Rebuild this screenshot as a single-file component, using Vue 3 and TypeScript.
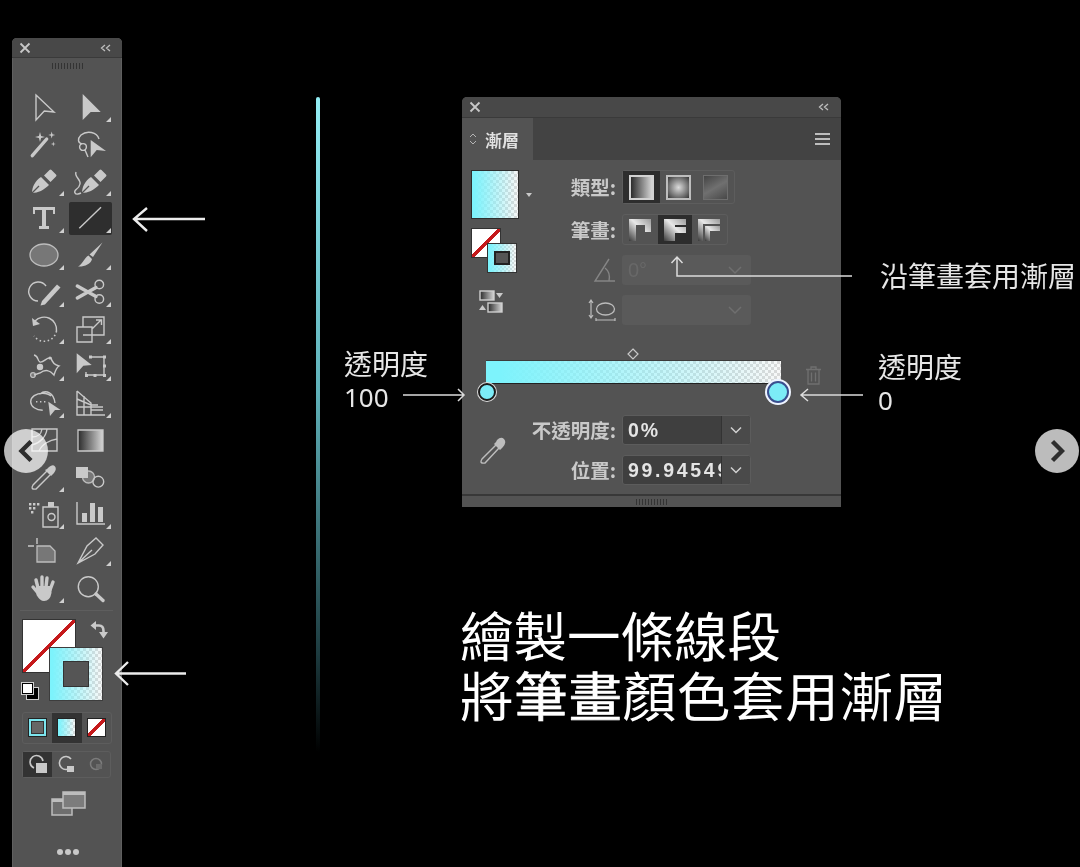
<script setup lang="ts">
interface Tool {
  s?: string // thin outline
  t?: string // heavy stroke
  f?: string // solid fill
  m?: string // mid grey fill with outline
  k?: string // dark cut over a fill
  dash?: string
  grad?: string
  corner?: boolean
  active?: boolean
}

const circle = (cx: number, cy: number, r: number) =>
  `M${cx - r} ${cy}a${r} ${r} 0 1 0 ${r * 2} 0a${r} ${r} 0 1 0 ${-r * 2} 0Z`

const star = (x: number, y: number, r: number) => {
  const k = r * 0.22
  return `M${x} ${y - r}L${x + k} ${y - k}L${x + r} ${y}L${x + k} ${y + k}L${x} ${y + r}L${x - k} ${y + k}L${x - r} ${y}L${x - k} ${y - k}Z`
}

const nib = (o: number) =>
  `M${6 + o} 30C${6 + o} 24 ${9 + o} 18 ${15 + o} 14L${23 + o} 22C${18 + o} 27 ${12 + o} 30 ${6 + o} 30Z` +
  `M${18 + o} 12.5L${23.5 + o} 7Q${24.5 + o} 6 ${25.5 + o} 7L${30 + o} 11.5Q${31 + o} 12.5 ${30 + o} 13.5L${24.5 + o} 19Z`

const tools: Tool[] = [
  { s: 'M10 6L28 23L18.3 22L10 31Z' },
  { f: 'M9.7 5L27.7 23L17.7 23L9.7 31Z', corner: true },

  { t: 'M6.3 29.7L20.7 13', f: star(14, 11, 5) + star(25.7, 9, 3.5) + star(27.3, 18, 2.5) },
  {
    s: 'M26 13C24 6 14 4 8 9C4 13 5 17 9 18' + circle(10, 21, 3.4) + 'M12 24L15 31',
    f: 'M17.7 14L33 25L23.7 24L17.7 31.3Z'
  },

  { f: nib(0), k: 'M6 30L13 23', corner: true },
  { f: nib(3), k: 'M9 30L16 23', s: 'M3 9C1 14 8 16 7 21C6 27 0 26 2 30C3 32 6 31 8 30', corner: true },

  { f: 'M7 7H29V14H27V10H20V26H23V29H13V26H16V10H9V14H7Z', corner: true },
  { s: 'M6.3 28.3L28 7.3', corner: true, active: true },

  { m: 'M4 18a14 11 0 1 0 28 0a14 11 0 1 0 -28 0Z', corner: true },
  {
    f: 'M29.5 5.5L20 20L16.5 17.5ZM15.5 18.5L19 22C18 27 11 30 5 29.5C10 27 11 21 15.5 18.5Z',
    corner: true
  },

  { s: 'M20 12A9.5 9.5 0 1 0 12 27', f: 'M16 27L31 10.5L34.5 13.5L19 30.5L14.5 31.5Z', corner: true },
  { s: circle(26.3, 10.5, 4.3) + circle(26.3, 25, 4.3), t: 'M4.3 12L23 22.5M4.3 24L23 13.5', corner: true },

  {
    s: 'M9 10A12.5 12.5 0 0 1 30.5 20',
    dash: 'M30.5 20A12.5 12.5 0 0 1 8 25',
    f: 'M6 7L7 15L14 13Z',
    corner: true
  },
  { s: 'M10 16V6H31V24H19M4 16H19V31H4ZM10 24H19M19 18L28 9M23 9H28.5V14', corner: true },

  {
    s: 'M8 7C13 8 11 13 14 14C18 15 20 9 25 10C26 14 29 17 33 18C30 20 29 24 28 27C24 22 19 21 14 25L8 27',
    f: circle(14, 19, 3.2) + circle(24, 10, 1.6),
    m: circle(7, 27, 2.4),
    corner: true
  },
  {
    s: 'M18 9H31V27H13V24',
    f: 'M3.7 5.3L18.7 17L10.3 17.7L3.7 25.3ZM16 7.5h3v3h-3ZM30 7.5h3v3h-3ZM30 16.5h3v3h-3ZM30 26h3v3h-3ZM20.5 26h3v3h-3ZM12 26h3v3h-3Z',
    corner: true
  },

  {
    s: 'M16.7 25.2C10 25.2 4.7 21.4 4.7 16.7C4.7 12 10 8.2 16.7 8.2C20 8.2 23 9 25 11M14 9C20 4 28 8 29 18M10 16.7h1.4M14 16.7h1.4M18 16.7h1.4',
    f: 'M22.3 16.7L34.7 25L29 25L24 31Z',
    corner: true
  },
  {
    s: 'M4 6V30H32M4 6L18 18V30M4 14L18 20M4 22H30M11 11V30M18 20H25M18 25H30',
    corner: true
  },

  { s: 'M6 7H31V29H6ZM6 23C14 21 20 15 21 7M13 29C16 22 24 18 31 17M6 15C12 15 15 13 16 7' },
  { grad: 'M5 8H30V29H5Z' },

  {
    s: 'M21 12L7 26Q4 31 10 30L24 16',
    f: 'M19 11L25 17L28 14Q31 10 29 7.5Q27 5 23 8L21 10Z',
    corner: true
  },
  { f: 'M3 8H15V19H3Z', m: circle(15.5, 18, 6), s: circle(25.3, 22.7, 5.4) },

  {
    s: 'M17 11H32V31H17ZM29 21a3.5 3.5 0 1 0 -7 0a3.5 3.5 0 1 0 7 0Z',
    f: 'M22 6H28V11H22ZM3 7h2.4v2.4H3ZM7 7h2.4v2.4H7ZM11 7h2.4v2.4H11ZM3 11h2.4v2.4H3ZM7 11h2.4v2.4H7ZM5 15h2.4v2.4H5Z',
    corner: true
  },
  {
    s: 'M4 6V28H32',
    f: 'M9 17H14V26H9ZM17 7H22V26H17ZM25 11H30V26H25Z',
    corner: true
  },

  { m: 'M11 13H24L29 18V29H11Z', s: 'M2 13H8M11 5V11' },
  { s: 'M5 30L14 13L23 5L30 12L22 21ZM5 30L19 17', corner: true },

  {
    t: 'M12 18L10 10M16 17V7M20 17L21 8M24 20L27 12M12 23L7 17',
    f: 'M10 16H25.5V23Q24 31 18 31Q14 31 10.5 25Z',
    corner: true
  },
  { s: circle(15.3, 16.7, 10), t: 'M23 24L30 30.5' }
]
</script>

<template>
  <div class="stage">
    <svg class="defs" width="0" height="0">
      <defs>
        <linearGradient id="tool-grad">
          <stop offset="0" stop-color="#2b2b2b" />
          <stop offset="1" stop-color="#d6d6d6" />
        </linearGradient>
        <linearGradient id="stroke-grad" x1="0" y1="1" x2="1" y2="0">
          <stop offset="0" stop-color="#3a3a3a" />
          <stop offset="0.55" stop-color="#e8e8e8" />
          <stop offset="1" stop-color="#9a9a9a" />
        </linearGradient>
      </defs>
    </svg>

    <!-- tools panel -->
    <aside class="toolbar">
      <div class="title-bar">
        <svg width="12" height="12" viewBox="0 0 12 12"><path class="x" d="M1.5 1.5L10.5 10.5M10.5 1.5L1.5 10.5" /></svg>
        <svg class="collapse" width="11" height="8" viewBox="0 0 11 8"><path d="M5 1L1.5 4L5 7M10 1L6.5 4L10 7" /></svg>
      </div>
      <div class="grip-row"><i class="grip"></i></div>
      <div class="tools">
        <div v-for="(tool, i) in tools" :key="i" class="tool" :class="{ active: tool.active, corner: tool.corner }">
          <svg width="36" height="36" viewBox="0 0 36 36">
            <path v-if="tool.grad" :d="tool.grad" fill="url(#tool-grad)" stroke="#c9c9c9" stroke-width="1.3" />
            <path v-if="tool.m" class="mid" :d="tool.m" />
            <path v-if="tool.f" class="solid" :d="tool.f" />
            <path v-if="tool.k" class="cut" :d="tool.k" />
            <path v-if="tool.t" class="heavy" :d="tool.t" />
            <path v-if="tool.s" class="thin" :d="tool.s" />
            <path v-if="tool.dash" class="dots" :d="tool.dash" />
          </svg>
        </div>
      </div>
      <div class="divider"></div>
      <div class="colors">
        <div class="big-fill none"></div>
        <div class="big-stroke grad"><i></i></div>
        <svg class="swap" width="18" height="18" viewBox="0 0 18 18">
          <path d="M5 4.5H9Q13.5 4.5 13.5 10V12" fill="none" stroke="#c9c9c9" stroke-width="2.6" />
          <path d="M0.5 4.5L6 0V9ZM9 11H18L13.5 17.5Z" fill="#c9c9c9" />
        </svg>
        <div class="default-colors"><b></b><i></i></div>
      </div>
      <div class="seg modes">
        <div class="mode"><span class="mini ring"><i></i></span></div>
        <div class="mode on"><span class="mini grad"></span></div>
        <div class="mode"><span class="mini none"></span></div>
      </div>
      <div class="seg draws">
        <div class="draw on"><svg width="22" height="22" viewBox="0 0 22 22"><path d="M16 8A6.5 6.5 0 1 0 7 15" fill="none" stroke="#c9c9c9" stroke-width="1.6" /><path d="M9 10H20V20H9Z" fill="#c9c9c9" /></svg></div>
        <div class="draw"><svg width="22" height="22" viewBox="0 0 22 22"><path d="M15 14A6.5 6.5 0 1 1 15 6" fill="none" stroke="#c9c9c9" stroke-width="1.6" /><path d="M11 13H18V19H11Z" fill="#c9c9c9" /></svg></div>
        <div class="draw"><svg width="22" height="22" viewBox="0 0 22 22"><circle cx="11" cy="11" r="5.5" fill="none" stroke="#7c7c7c" stroke-width="1.5" /><path d="M11 11H17V16H11Z" fill="#6b6b6b" /></svg></div>
      </div>
      <svg class="screen" width="36" height="26" viewBox="0 0 36 26">
        <path d="M2 9H22V25H2Z" fill="#6e6e6e" stroke="#bdbdbd" stroke-width="1.5" />
        <path d="M13 2H35V18H13Z" fill="#7c7c7c" stroke="#bdbdbd" stroke-width="1.5" />
        <path d="M13 2H35V5H13ZM2 9H13V12H2Z" fill="#bdbdbd" />
      </svg>
      <div class="dots-row"><i></i><i></i><i></i></div>
    </aside>

    <div class="line"></div>

    <!-- gradient panel -->
    <section class="panel">
      <div class="title-bar">
        <svg width="12" height="12" viewBox="0 0 12 12"><path class="x" d="M1.5 1.5L10.5 10.5M10.5 1.5L1.5 10.5" /></svg>
        <svg class="collapse" width="11" height="8" viewBox="0 0 11 8"><path d="M5 1L1.5 4L5 7M10 1L6.5 4L10 7" /></svg>
      </div>
      <div class="tabs">
        <div class="tab">
          <svg width="10" height="14" viewBox="0 0 10 14"><path d="M2 5L5 2L8 5M2 9L5 12L8 9" fill="none" stroke="#b5b5b5" /></svg>
          <span>漸層</span>
        </div>
        <div class="burger"><i></i><i></i><i></i></div>
      </div>

      <div class="top">
        <div class="left-col">
          <div class="swatch-wrap">
            <div class="swatch grad"></div>
            <i class="tri"></i>
          </div>
          <div class="small-pair">
            <div class="small-fill none"></div>
            <div class="small-stroke grad"><i></i></div>
          </div>
          <svg class="reverse" width="26" height="24" viewBox="0 0 26 24">
            <rect x="2" y="1" width="14" height="9" fill="url(#tool-grad)" stroke="#cfcfcf" stroke-width="1.4" />
            <path d="M18 3H25L21.5 8Z" fill="#c9c9c9" />
            <path d="M1 20H8L4.5 15Z" fill="#c9c9c9" />
            <rect x="10" y="13" width="14" height="9" fill="url(#tool-grad)" stroke="#cfcfcf" stroke-width="1.4" />
          </svg>
        </div>
        <div class="rows">
          <div class="row type-row">
            <label>類型:</label>
            <div class="seg types">
              <div class="type on"><i class="ico linear"></i></div>
              <div class="type"><i class="ico radial"></i></div>
              <div class="type"><i class="ico free"></i></div>
            </div>
          </div>
          <div class="row stroke-row">
            <label>筆畫:</label>
            <div class="seg strokes">
              <div class="type">
                <svg width="24" height="24" viewBox="0 0 24 24"><path d="M1 1H23V14H17V7H8V23H1Z" fill="url(#stroke-grad)" /></svg>
              </div>
              <div class="type on">
                <svg width="24" height="24" viewBox="0 0 24 24"><path d="M1 1H23V7H12V9H23V15H12V23H1Z" fill="url(#stroke-grad)" /></svg>
              </div>
              <div class="type">
                <svg width="24" height="24" viewBox="0 0 24 24"><path d="M1 23V1H23V6H6V23Z" fill="url(#stroke-grad)" /><path d="M8 23V8H23V13H13V23Z" fill="url(#stroke-grad)" /></svg>
              </div>
            </div>
          </div>
          <div class="row off-row">
            <label>
              <svg width="24" height="26" viewBox="0 0 24 26"><path d="M17 2L3 24H23M13 11C17 14 18 19 17 24" fill="none" stroke="#858585" stroke-width="1.4" /></svg>
            </label>
            <div class="field off"><span>0°</span><svg class="chev" width="16" height="10" viewBox="0 0 16 10"><path d="M2 2L8 8L14 2" fill="none" stroke="#6f6f6f" stroke-width="1.5" /></svg></div>
          </div>
          <div class="row off-row">
            <label>
              <svg width="28" height="24" viewBox="0 0 28 24"><path d="M3 2V20M1 5L3 2L5 5M1 17L3 20L5 17M8 22H27M8 20V23M27 20V23" fill="none" stroke="#bcbcbc" stroke-width="1.2" /><ellipse cx="17.5" cy="11" rx="9" ry="6" fill="none" stroke="#bcbcbc" stroke-width="1.3" /></svg>
            </label>
            <div class="field off"><span></span><svg class="chev" width="16" height="10" viewBox="0 0 16 10"><path d="M2 2L8 8L14 2" fill="none" stroke="#6f6f6f" stroke-width="1.5" /></svg></div>
          </div>
        </div>
      </div>

      <div class="ramp">
        <svg class="diamond" width="12" height="12" viewBox="0 0 12 12"><path d="M6 1L11 6L6 11L1 6Z" fill="none" stroke="#c9c9c9" stroke-width="1.2" /></svg>
        <div class="bar grad"></div>
        <span class="stop first"></span>
        <span class="stop last"></span>
        <svg class="trash" width="17" height="19" viewBox="0 0 17 19">
          <path d="M1 3.5H16M6 3V1H11V3M3 4V18H14V4M6.5 6.5V15.5M10.5 6.5V15.5" fill="none" stroke="#707070" stroke-width="1.3" />
        </svg>
      </div>

      <div class="values">
        <svg class="picker" width="28" height="28" viewBox="0 0 28 28">
          <path d="M17 9L3 23Q0 28 6 27L20 12" fill="none" stroke="#bdbdbd" stroke-width="1.4" />
          <path d="M15 8L21 14L24 11Q28 6 25 3Q22 0 18 4L17 6Z" fill="#bdbdbd" />
        </svg>
        <div class="rows">
          <div class="row">
            <label>不透明度:</label>
            <div class="field on"><span>0%</span><em><svg width="14" height="8" viewBox="0 0 14 8"><path d="M2 1.5L7 6.5L12 1.5" fill="none" stroke="#d0d0d0" stroke-width="1.5" /></svg></em></div>
          </div>
          <div class="row">
            <label>位置:</label>
            <div class="field on long"><span>99.94549</span><em><svg width="14" height="8" viewBox="0 0 14 8"><path d="M2 1.5L7 6.5L12 1.5" fill="none" stroke="#d0d0d0" stroke-width="1.5" /></svg></em></div>
          </div>
        </div>
      </div>
      <div class="panel-foot"><i class="grip"></i></div>
    </section>

    <!-- annotations -->
    <div class="note n-stroke">沿筆畫套用漸層</div>
    <div class="note n-left">透明度<br /><span>100</span></div>
    <div class="note n-right">透明度<br /><span>0</span></div>
    <h1 class="headline">繪製一條線段<br /><span class="wide">將<b>筆畫</b>顏色套用漸層</span></h1>

    <svg class="arrows" width="1080" height="867" viewBox="0 0 1080 867">
      <g class="bold">
        <path d="M134 219H205M147 208L134 219L147 231" />
        <path d="M116 673.5H186M128 662L116 673.5L128 685" />
      </g>
      <g class="fine">
        <path d="M403 395H463M458 389L464 395L458 401" />
        <path d="M863 395H802M808 389L801 395L808 401" />
        <path d="M852 276H677V258M671.5 263L677 257L682.5 263" />
      </g>
    </svg>

    <button class="nav prev" type="button">
      <svg width="16" height="24" viewBox="0 0 16 24"><path d="M13 2.5L3.5 12L13 21.5" /></svg>
    </button>
    <button class="nav next" type="button">
      <svg width="16" height="24" viewBox="0 0 16 24"><path d="M3.5 2.5L13 12L3.5 21.5" /></svg>
    </button>
  </div>
</template>

<style scoped>
.stage {
  position: relative;
  width: 1080px;
  height: 867px;
  overflow: hidden;
  background: #000;
  font-family: "Noto Sans CJK TC", "Liberation Sans", sans-serif;
  filter: blur(0.45px);
  --cyan: #7df3fc;
}
.defs {
  position: absolute;
}

/* shared swatch fills */
.grad {
  background-image:
    linear-gradient(90deg, var(--cyan) 5%, rgba(125, 243, 252, 0)),
    conic-gradient(#d9d9d9 25%, #f8f8f8 0 50%, #d9d9d9 0 75%, #f8f8f8 0);
  background-size: 100% 100%, 6px 6px;
}
.none {
  background: linear-gradient(to top left, #fff calc(50% - 1.5px), #c5191b calc(50% - 1.5px), #c5191b calc(50% + 1.5px), #fff calc(50% + 1.5px));
}
.grip {
  display: block;
  width: 31px;
  height: 6px;
  background: repeating-linear-gradient(90deg, #333 0 1px, transparent 1px 3px);
}
.seg {
  display: flex;
  border: 1px solid #5d5d5d;
  border-radius: 3px;
}

/* title bars */
.title-bar {
  display: flex;
  align-items: center;
  justify-content: space-between;
  height: 20px;
  padding: 0 11px 0 7px;
  background: #484848;
  border-bottom: 1px solid #3a3a3a;
  border-radius: 5px 5px 0 0;
  box-sizing: border-box;
}
.x {
  fill: none;
  stroke: #c8c8c8;
  stroke-width: 1.8;
}
.collapse path {
  fill: none;
  stroke: #bdbdbd;
  stroke-width: 1.3;
}

/* toolbar */
.toolbar {
  position: absolute;
  left: 12px;
  top: 38px;
  width: 110px;
  height: 829px;
  background: #535353;
  border-radius: 5px 5px 0 0;
  box-shadow: inset 1px 0 #5f5f5f, inset -1px 0 #5f5f5f;
}
.grip-row {
  height: 30.5px;
  display: flex;
  justify-content: center;
  padding-top: 5px;
  box-sizing: border-box;
}
.tools {
  display: grid;
  grid-template-columns: 47px 47px;
  grid-auto-rows: 37px;
  padding-left: 8.5px;
}
.tool {
  position: relative;
  display: flex;
  align-items: center;
  justify-content: center;
}
.tool.active::before {
  content: "";
  position: absolute;
  left: 1px;
  top: 2px;
  width: 43px;
  height: 33px;
  border-radius: 2px;
  background: #2e2e2e;
}
.tool svg {
  position: relative;
  overflow: visible;
}
.tool.corner::after {
  content: "";
  position: absolute;
  left: 38px;
  top: 28.5px;
  border-style: solid;
  border-width: 0 0 5px 5px;
  border-color: transparent transparent #cfcfcf transparent;
}
.thin {
  fill: none;
  stroke: #c9c9c9;
  stroke-width: 1.4;
}
.heavy {
  fill: none;
  stroke: #c9c9c9;
  stroke-width: 3.4;
  stroke-linecap: round;
}
.solid {
  fill: #c9c9c9;
}
.cut {
  fill: none;
  stroke: #535353;
  stroke-width: 1.2;
}
.mid {
  fill: #777;
  stroke: #bdbdbd;
  stroke-width: 1.3;
}
.dots {
  fill: none;
  stroke: #c9c9c9;
  stroke-width: 1.6;
  stroke-dasharray: 1.5 2.6;
}
.divider {
  height: 1px;
  margin: 3.5px 9px 0 8px;
  background: #5e5e5e;
}
.colors {
  position: relative;
  height: 82px;
  margin-top: 7.5px;
}
.big-fill {
  position: absolute;
  left: 10px;
  top: 0;
  width: 54px;
  height: 54px;
  box-sizing: border-box;
  border: 1px solid #333;
}
.big-stroke {
  position: absolute;
  left: 37px;
  top: 28px;
  width: 54px;
  height: 54px;
  box-sizing: border-box;
  border: 1px solid #3d3d3d;
  display: flex;
  align-items: center;
  justify-content: center;
}
.big-stroke i {
  width: 24px;
  height: 24px;
  background: #555;
  border: 1px solid #333;
}
.swap {
  position: absolute;
  left: 78px;
  top: 2px;
}
.default-colors {
  position: absolute;
  left: 9px;
  top: 63px;
  width: 18px;
  height: 18px;
}
.default-colors i,
.default-colors b {
  position: absolute;
  width: 11px;
  height: 11px;
  box-sizing: border-box;
  box-shadow: 0 0 0 1px #cfcfcf;
}
.default-colors b {
  left: 6px;
  top: 6px;
  background: #000;
}
.default-colors i {
  left: 1px;
  top: 1px;
  background: #fff;
  border: 1px solid #000;
}
.modes {
  height: 32px;
  width: 90px;
  margin: 11px 0 0 10px;
  box-sizing: border-box;
}
.mode {
  flex: 1;
  display: flex;
  align-items: center;
  justify-content: center;
}
.mode.on {
  background: #333;
}
.mini {
  width: 19px;
  height: 19px;
  box-sizing: border-box;
  border: 1px solid #222;
  display: flex;
  align-items: center;
  justify-content: center;
}
.ring {
  background: #7ce5ee;
}
.ring i {
  width: 11px;
  height: 11px;
  background: #666;
  border: 1px solid #333;
}
.draws {
  height: 27px;
  width: 89px;
  margin: 7px 0 0 10px;
  box-sizing: border-box;
}
.draw {
  flex: 1;
  display: flex;
  align-items: center;
  justify-content: center;
}
.draw.on {
  background: #333;
}
.screen {
  display: block;
  margin: 12px 0 0 38px;
}
.dots-row {
  display: flex;
  gap: 2px;
  margin: 33px 0 0 45px;
}
.dots-row i {
  width: 6px;
  height: 6px;
  border-radius: 50%;
  background: #c9c9c9;
}

/* vertical stroke preview */
.line {
  position: absolute;
  left: 316px;
  top: 97px;
  width: 4px;
  height: 655px;
  border-radius: 2px;
  background: linear-gradient(180deg, #93edf4, #5fb1b9 45%, #1d3b3f 85%, #000);
}

/* gradient panel */
.panel {
  position: absolute;
  left: 462px;
  top: 97px;
  width: 379px;
  height: 410px;
  background: #535353;
  border-radius: 5px 5px 0 0;
  color: #c9c9c9;
}
.panel .title-bar {
  height: 21px;
  padding: 0 12px 0 7px;
}
.tabs {
  display: flex;
  justify-content: space-between;
  height: 42px;
  background: #434343;
}
.tab {
  display: flex;
  align-items: center;
  gap: 7px;
  width: 71px;
  padding-left: 6px;
  box-sizing: border-box;
  background: #535353;
  font-size: 17px;
  font-weight: 700;
  color: #e2e2e2;
}
.burger {
  display: flex;
  flex-direction: column;
  justify-content: center;
  gap: 3px;
  padding-right: 11px;
}
.burger i {
  display: block;
  width: 15px;
  height: 2px;
  background: #bdbdbd;
}
.top {
  display: flex;
  padding-top: 10px;
}
.left-col {
  width: 68px;
  padding-left: 9px;
  box-sizing: border-box;
}
.swatch-wrap {
  display: flex;
  align-items: center;
  gap: 7px;
}
.swatch {
  width: 48px;
  height: 49px;
  box-sizing: border-box;
  border: 1px solid #2e2e2e;
  flex: none;
}
.tri {
  border-style: solid;
  border-width: 4px 3px 0;
  border-color: #c9c9c9 transparent transparent;
}
.small-pair {
  position: relative;
  height: 45px;
  margin-top: 9px;
}
.small-fill {
  position: absolute;
  left: 0;
  top: 0;
  width: 30px;
  height: 30px;
  box-sizing: border-box;
  border: 1px solid #333;
}
.small-stroke {
  position: absolute;
  left: 16px;
  top: 15px;
  width: 30px;
  height: 30px;
  box-sizing: border-box;
  border: 1px solid #333;
  background-size: 100% 100%, 4px 4px;
  display: flex;
  align-items: center;
  justify-content: center;
}
.small-stroke i {
  width: 12px;
  height: 10px;
  background: #555;
  border: 2px solid #222;
}
.reverse {
  display: block;
  margin: 17px 0 0 7px;
}
.rows {
  display: flex;
  flex-direction: column;
  gap: 10px;
}
.row {
  display: flex;
  align-items: center;
  gap: 6px;
}
.row label {
  width: 86px;
  display: flex;
  justify-content: flex-end;
  align-items: center;
  font-size: 19.5px;
  font-weight: 700;
  line-height: 22px;
  white-space: nowrap;
}
.type-row {
  height: 34px;
}
.stroke-row {
  height: 31px;
}
.off-row {
  height: 30px;
}
.type-row .seg,
.stroke-row .seg {
  height: 100%;
  box-sizing: border-box;
}
.types .type {
  width: 37px;
}
.strokes .type {
  width: 34.5px;
}
.type {
  display: flex;
  align-items: center;
  justify-content: center;
}
.type.on {
  background: #2d2d2d;
}
.ico {
  width: 25px;
  height: 25px;
  box-sizing: border-box;
  border: 2px solid #d2d2d2;
}
.linear {
  background: linear-gradient(90deg, #2c2c2c, #d6d6d6);
}
.radial {
  background: radial-gradient(circle, #dcdcdc, #3f3f3f 95%);
  border-color: #bdbdbd;
}
.free {
  border-color: #6e6e6e;
  border-width: 1px;
  background: linear-gradient(150deg, #444, #707070 50%, #484848);
}
.field {
  width: 129px;
  height: 30px;
  display: flex;
  align-items: center;
  justify-content: space-between;
  box-sizing: border-box;
  border-radius: 3px;
}
.field.off {
  background: #5a5a5a;
  padding: 0 8px 0 6px;
  color: #686868;
  font: 400 20px/1 "Liberation Sans", sans-serif;
}
.field.on {
  background: #3f3f3f;
  border: 1px solid #5c5c5c;
  color: #e4e4e4;
  font: 700 19.5px/28px "Liberation Sans", sans-serif;
  letter-spacing: 2px;
  overflow: hidden;
}
.field.long {
  letter-spacing: 2.7px;
}
.field.on span {
  width: 98px;
  padding-left: 5px;
  box-sizing: border-box;
  overflow: hidden;
  white-space: nowrap;
  flex: none;
}
.field.on em {
  width: 28px;
  height: 100%;
  flex: none;
  background: #4a4a4a;
  border-left: 1px solid #333;
  display: flex;
  align-items: center;
  justify-content: center;
}
.ramp {
  position: relative;
  height: 22px;
  margin: 36px 0 0 24px;
  width: 295px;
}
.bar {
  height: 100%;
  box-shadow: 0 1px #222, 0 -1px #3c3c3c;
}
.diamond {
  position: absolute;
  left: 141px;
  top: -13px;
}
.stop {
  position: absolute;
  border-radius: 50%;
  background: #7cecf7;
  box-sizing: border-box;
}
.stop.first {
  left: -8px;
  top: 22px;
  width: 18px;
  height: 18px;
  border: 2px solid #1c1c1c;
  box-shadow: 0 0 0 1px #dcdcdc;
}
.stop.last {
  left: 281px;
  top: 20px;
  width: 22px;
  height: 22px;
  border: 2px solid #3a4f8f;
  box-shadow: 0 0 0 2px #eef4ff;
}
.trash {
  position: absolute;
  left: 319px;
  top: 5px;
}
.values {
  position: relative;
  display: flex;
  margin-top: 32px;
  padding-left: 68px;
}
.picker {
  position: absolute;
  left: 17px;
  top: 21px;
}
.panel-foot {
  margin-top: 9px;
  height: 11px;
  border-top: 2px solid #383838;
  display: flex;
  justify-content: center;
  padding-top: 3px;
}

/* annotation text */
.note {
  position: absolute;
  color: #e6e6e6;
  font-size: 28px;
  font-weight: 400;
  line-height: 32px;
  white-space: nowrap;
}
.note span {
  font-family: "Noto Sans", sans-serif;
  font-size: 26px;
}
.n-stroke {
  left: 880px;
  top: 259px;
}
.n-left {
  left: 344px;
  top: 347px;
}
.n-right {
  left: 878px;
  top: 350px;
}
.headline {
  position: absolute;
  left: 460px;
  top: 604px;
  margin: 0;
  color: #fff;
  font-size: 53.5px;
  font-weight: 400;
  line-height: 60px;
  white-space: nowrap;
}
.headline .wide {
  letter-spacing: 0.7px;
}
.headline b {
  font-weight: 400;
  -webkit-text-stroke: 0.7px #fff;
}
.arrows {
  position: absolute;
  left: 0;
  top: 0;
  pointer-events: none;
}
.bold path {
  fill: none;
  stroke: #ececec;
  stroke-width: 2.4;
}
.fine path {
  fill: none;
  stroke: #dcdcdc;
  stroke-width: 1.5;
}
.nav {
  position: absolute;
  top: 429px;
  width: 44px;
  height: 44px;
  padding: 0;
  border: 0;
  border-radius: 50%;
  display: flex;
  align-items: center;
  justify-content: center;
}
.nav path {
  fill: none;
  stroke: #2e2e2e;
  stroke-width: 4.4;
}
.prev {
  left: 4px;
  background: rgba(255, 255, 255, 0.72);
}
.next {
  left: 1035px;
  background: #bcbcbc;
}
</style>

<style>
html,
body {
  margin: 0;
  background: #000;
  overflow: hidden;
}
</style>
